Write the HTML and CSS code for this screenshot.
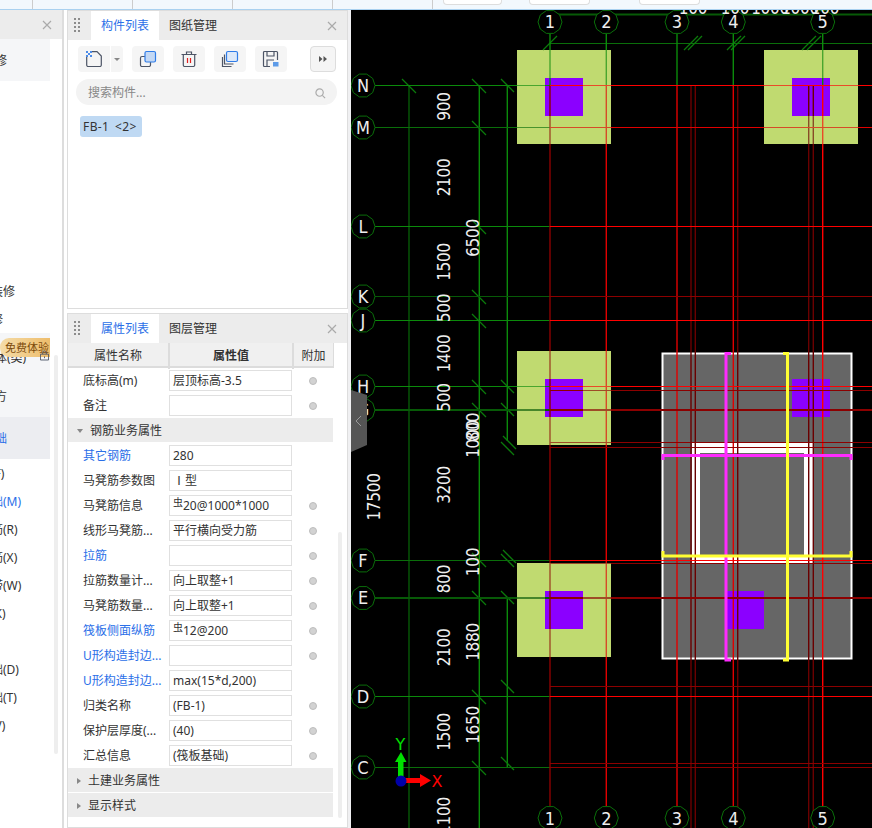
FILE: index.html
```html
<!DOCTYPE html>
<html lang="zh">
<head>
<meta charset="utf-8">
<title>属性列表</title>
<link rel="stylesheet" href="styles.css">
</head>
<body>
<header class="strip">
  <div class="cell cell-first"></div>
  <div class="cell"></div>
  <div class="cell"></div>
  <div class="cell"></div>
  <div class="cell"></div>
  <div class="stub stub-a"></div>
  <div class="stub stub-b"></div>
  <div class="stub stub-c"></div>
</header>
<main class="main">
  <aside class="tree-panel">
    <div class="tree-head"><svg class="close" viewBox="0 0 10 10"><path d="M1 1l8 8M9 1l-8 8"/></svg></div>
    <div class="tree-body">
      <ul class="tree">
        <li class="group soft"><span class="glabel">装修</span></li>
        <li class="item"><span class="ilabel">楼地面</span></li>
        <li class="item"><span class="ilabel">踢脚(V)</span></li>
        <li class="item"><span class="ilabel">墙裙</span></li>
        <li class="item"><span class="ilabel">墙面</span></li>
        <li class="item"><span class="ilabel">天棚</span></li>
        <li class="item"><span class="ilabel">吊顶</span></li>
        <li class="item"><span class="ilabel">房间</span></li>
        <li class="item"><span class="ilabel">独立柱装修</span></li>
        <li class="item"><span class="ilabel">单梁装修</span></li>
        <li class="group soft badge-row"><span class="glabel">砌体(类)</span>
          <span class="badge">免费体验</span>
          <svg class="lock" viewBox="0 0 10 11"><path d="M3 4V2.500a2 2 0 0 1 4 0V4M.5 4h9v6.500h-9z"/><path d="M5 6.500v2"/></svg>
        </li>
        <li class="group soft"><span class="glabel">土方</span></li>
        <li class="group active"><span class="glabel">基础</span></li>
        <li class="item"><span class="ilabel">基础梁(F)</span></li>
        <li class="item on"><span class="ilabel">筏板基础(M)</span></li>
        <li class="item"><span class="ilabel">筏板主筋(R)</span></li>
        <li class="item"><span class="ilabel">筏板负筋(X)</span></li>
        <li class="item"><span class="ilabel">基础板带(W)</span></li>
        <li class="item"><span class="ilabel">集水坑(K)</span></li>
        <li class="item"><span class="ilabel">柱墩</span></li>
        <li class="item"><span class="ilabel">独立基础(D)</span></li>
        <li class="item"><span class="ilabel">条形基础(T)</span></li>
        <li class="item"><span class="ilabel">桩承台(V)</span></li>
      </ul>
      <div class="tree-track"></div>
    </div>
  </aside>

  <section class="mid">
    <div class="panel panel-list">
      <div class="phead">
        <svg class="grip" viewBox="0 0 6 15"><path d="M0 0h2v2H0zM4 0h2v2H4zM0 4h2v2H0zM4 4h2v2H4zM0 8h2v2H0zM4 8h2v2H4zM0 12h2v2H0zM4 12h2v2H4z"/></svg>
        <span class="tab current">构件列表</span>
        <span class="tab">图纸管理</span>
        <svg class="close end" viewBox="0 0 10 10"><path d="M1 1l8 8M9 1l-8 8"/></svg>
      </div>
      <div class="tools">
        <div class="split">
          <button class="tool tool-main">
            <svg class="ico" viewBox="0 0 16 16"><path class="line" d="M.7 5v9a1.500 1.500 0 0 0 1.500 1.500h11.600a1.500 1.500 0 0 0 1.500-1.500V5L11 .7H6"/><path class="dots" d="M0 0h2v2H0zM4 0h2v2H4zM2 2h2v2H2zM0 4h2v2H0zM4 4h2v2H4z"/></svg>
          </button>
          <button class="tool tool-drop"><span class="caret"></span></button>
        </div>
        <button class="tool"><svg class="ico" viewBox="0 0 16 16"><path class="line" d="M5 5.500H2A1.500 1.500 0 0 0 .5 7v7A1.500 1.500 0 0 0 2 15.500h7a1.500 1.500 0 0 0 1.500-1.500v-3"/><rect class="front" x="5" y=".5" width="10.500" height="10.500" rx="1.500"/></svg></button>
        <button class="tool"><svg class="ico" viewBox="0 0 16 16"><path class="line" d="M.5 3.500h15M5.500 3.500V1h5v2.500M2.300 3.500v10.500a1.500 1.500 0 0 0 1.500 1.500h8.400a1.500 1.500 0 0 0 1.500-1.500V3.500"/><path class="red" d="M6.500 7v5M9.500 7v5"/></svg></button>
        <button class="tool"><svg class="ico" viewBox="0 0 16 16"><path class="line" d="M2.500 3.500v9.500h9M.5 6v9.500h9"/><rect class="front pale" x="4.500" y=".5" width="11" height="10" rx="1.500"/></svg></button>
        <button class="tool"><svg class="ico" viewBox="0 0 16 16"><path class="line" d="M7 15.500H1.500a1 1 0 0 1-1-1v-13a1 1 0 0 1 1-1h12a1 1 0 0 1 1 1V9M4 15.500V9h7M4 .5v4.500h7V.5"/><rect class="save" x="9.500" y="10.500" width="6.500" height="5.500"/></svg></button>
        <button class="tool tool-more"><svg class="more" viewBox="0 0 8 6"><path d="M0 0l3.500 3L0 6zM4.500 0L8 3 4.500 6z"/></svg></button>
      </div>
      <div class="search">
        <span>搜索构件...</span>
        <svg class="lens" viewBox="0 0 12 12"><circle cx="5" cy="5" r="4"/><path d="M8 8l3 3"/></svg>
      </div>
      <div class="tag">FB-1 &lt;2&gt;</div>
    </div>

    <div class="panel panel-props">
      <div class="phead">
        <svg class="grip" viewBox="0 0 6 15"><path d="M0 0h2v2H0zM4 0h2v2H4zM0 4h2v2H0zM4 4h2v2H4zM0 8h2v2H0zM4 8h2v2H4zM0 12h2v2H0zM4 12h2v2H4z"/></svg>
        <span class="tab current">属性列表</span>
        <span class="tab">图层管理</span>
        <svg class="close end" viewBox="0 0 10 10"><path d="M1 1l8 8M9 1l-8 8"/></svg>
      </div>
      <div class="props-body">
        <div class="props">
          <div class="thead">
            <div>属性名称</div><div class="th-value">属性值</div><div>附加</div>
          </div>
          <div class="trow"><span class="name">底标高(m)</span><span class="val">层顶标高-3.5</span><i class="dot"></i></div>
          <div class="trow"><span class="name">备注</span><span class="val"></span><i class="dot"></i></div>
          <div class="gro"><span class="tri down"></span>钢筋业务属性</div>
          <div class="trow"><span class="name link">其它钢筋</span><span class="val">280</span></div>
          <div class="trow"><span class="name">马凳筋参数图</span><span class="val">Ⅰ型</span></div>
          <div class="trow"><span class="name">马凳筋信息</span><span class="val"><sup class="rebar">虫</sup>20@1000*1000</span><i class="dot"></i></div>
          <div class="trow"><span class="name">线形马凳筋...</span><span class="val">平行横向受力筋</span><i class="dot"></i></div>
          <div class="trow"><span class="name link">拉筋</span><span class="val"></span><i class="dot"></i></div>
          <div class="trow"><span class="name">拉筋数量计...</span><span class="val">向上取整+1</span><i class="dot"></i></div>
          <div class="trow"><span class="name">马凳筋数量...</span><span class="val">向上取整+1</span><i class="dot"></i></div>
          <div class="trow"><span class="name link">筏板侧面纵筋</span><span class="val"><sup class="rebar">虫</sup>12@200</span><i class="dot"></i></div>
          <div class="trow"><span class="name link">U形构造封边...</span><span class="val"></span><i class="dot"></i></div>
          <div class="trow"><span class="name link">U形构造封边...</span><span class="val">max(15*d,200)</span></div>
          <div class="trow"><span class="name">归类名称</span><span class="val">(FB-1)</span><i class="dot"></i></div>
          <div class="trow"><span class="name">保护层厚度(...</span><span class="val">(40)</span><i class="dot"></i></div>
          <div class="trow"><span class="name">汇总信息</span><span class="val">(筏板基础)</span><i class="dot"></i></div>
          <div class="gro"><span class="tri"></span>土建业务属性</div>
          <div class="gro"><span class="tri"></span>显示样式</div>
        </div>
        <div class="props-track"></div>
      </div>
    </div>
  </section>

  <section class="canvas">
    <svg class="cad" viewBox="351 10 521 818" width="521" height="818">
      <defs>
        <polygon id="b" points="12,0 9.700,7.050 3.700,11.400 -3.700,11.400 -9.700,7.050 -12,0 -9.700,-7.050 -3.700,-11.400 3.700,-11.400 9.700,-7.050"/>
      </defs>
      <rect class="bg" x="351" y="10" width="521" height="818"/>

      <!-- footings -->
      <rect class="foot" x="517" y="50" width="94" height="94"/>
      <rect class="foot" x="764" y="50" width="94" height="94"/>
      <rect class="foot" x="517" y="351" width="94" height="94"/>
      <rect class="foot" x="517" y="563" width="94" height="94"/>

      <!-- slab -->
      <rect class="slab" x="662.500" y="353.500" width="189" height="305"/>
      <rect class="hole" x="692" y="443" width="121" height="121"/>
      <rect class="holein" x="700" y="453" width="104" height="103"/>

      <!-- columns -->
      <rect class="col" x="545" y="78" width="38" height="38"/>
      <rect class="col" x="792" y="78" width="38" height="38"/>
      <rect class="col" x="545" y="379" width="38" height="38"/>
      <rect class="col" x="792" y="379" width="38" height="38"/>
      <rect class="col" x="545" y="591" width="38" height="38"/>
      <rect class="col" x="726" y="591" width="38" height="38"/>

      <!-- dimension lines -->
      <path class="gd v" d="M409 85V828"/>
      <path class="g1 v" d="M479.300 85V828M507.300 85V441M507.300 598V767"/>
      <path class="gd2" d="M557 14.500H872"/>
      <path class="g2" d="M550 43.500H872"/>
      <path class="tick" d="M402 79l14 14"/>
      <path class="tick" d="M472 79l14 14M472 121l14 14M472 220l14 14M472 290l14 14M472 314l14 14M472 380l14 14M472 403l14 14M472 553l14 14M472 591l14 14M472 690l14 14M472 761l14 14"/>
      <path class="tick" d="M501 79l13 13M501 380l13 13M501 403l13 13M501 591l13 13M501 680l13 13M501 757l13 13M501 442l13 13M503 436l13 13M501 554l13 13M503 550l13 13"/>
      <path class="tick" d="M543 50l14-14M684 50l14-14M688 50l14-14M727 50l14-14M731 50l14-14M802 50l14-14M807 50l14-14"/>
      <path class="tick" d="M544 20l10-9M601 20l9-9M672 20l9-9M729 20l9-9M817 20l9-9"/>

      <!-- green grid -->
      <path class="g1 v" d="M550 34V85M606.300 34V85M677 34V85M733.300 34V85M822.700 34V85"/>
      <path class="g1" d="M375 85.500H550M375 226.500H550M375 320.500H550M375 386.500H550M375 696.500H550"/>
      <path class="g2" d="M375 127.500H550M375 767.500H550M375 560.500H550"/>
      <path class="gd" d="M375 296.500H550"/>
      <path class="gd wide" d="M375 410H550M375 598H550"/>

      <!-- red grid -->
      <path class="rd v" d="M550 85V806"/>
      <path class="r2 v" d="M606.300 85V806M677 85V806M733.300 85V806"/>
      <path class="r1 v" d="M822.700 85V806"/>
      <path class="rk v" d="M691 85V828M695.300 85V828M737.700 85V828M808.700 85V828M813.300 85V828"/>
      <path class="r1" d="M550 85.500H872M550 226.500H872M550 320.500H872M550 386.500H872M550 560.500H872M550 696.500H872"/>
      <path class="r2" d="M550 127.500H872"/>
      <path class="rd" d="M550 296.500H872M550 390.500H872M550 442.500H872M550 447.500H872M550 563.500H872M550 686.500H872M550 763.500H872M550 767.500H872"/>
      <path class="rd wide" d="M550 410H872M550 598H872"/>

      <!-- veil softens the lines that run over the footing -->
      <path class="veil" d="M517 50h94v94h-94zM545 78v38h38V78zM764 50h94v94h-94zM792 78v38h38V78zM517 351h94v94h-94zM545 379v38h38v-38zM517 563h94v94h-94zM545 591v38h38v-38z"/>

      <!-- rebar -->
      <path class="mag" d="M731 353.500H726V660H731"/>
      <path class="mag" d="M663 460V455.500H851V460"/>
      <path class="yel" d="M783 353.500H787.500V660H783"/>
      <path class="yel" d="M663 551V556H851V551"/>

      <!-- axis bubbles -->
      <g class="bubbles">
        <use href="#b" x="550" y="22"/><use href="#b" x="606.300" y="22"/><use href="#b" x="677" y="22"/><use href="#b" x="733.300" y="22"/><use href="#b" x="822.700" y="22"/>
        <use href="#b" x="550" y="818"/><use href="#b" x="606.300" y="818"/><use href="#b" x="677" y="818"/><use href="#b" x="733.300" y="818"/><use href="#b" x="822.700" y="818"/>
        <use href="#b" x="363" y="85.500"/><use href="#b" x="363" y="127.500"/><use href="#b" x="363" y="226.500"/><use href="#b" x="363" y="296.500"/><use href="#b" x="363" y="320.500"/><use href="#b" x="363" y="386.500"/><use href="#b" x="363" y="410"/><use href="#b" x="363" y="560.500"/><use href="#b" x="363" y="598"/><use href="#b" x="363" y="696.500"/><use href="#b" x="363" y="767.500"/>
      </g>
      <g class="label">
        <text x="550" y="28">1</text><text x="606.300" y="28">2</text><text x="677" y="28">3</text><text x="733.300" y="28">4</text><text x="822.700" y="28">5</text>
        <text x="550" y="825">1</text><text x="606.300" y="825">2</text><text x="677" y="825">3</text><text x="733.300" y="825">4</text><text x="822.700" y="825">5</text>
        <text x="363" y="92">N</text><text x="363" y="134">M</text><text x="363" y="233">L</text><text x="363" y="303">K</text><text x="363" y="327">J</text><text x="363" y="393">H</text><text x="363" y="416">G</text><text x="363" y="567">F</text><text x="363" y="604">E</text><text x="363" y="703">D</text><text x="363" y="774">C</text>
      </g>

      <!-- horizontal dimension text, clipped by the top of the view -->
      <g class="dim">
        <text x="693" y="14">100</text><text x="735" y="14">100</text><text x="770" y="14">1000</text><text x="800" y="14">1000</text><text x="825" y="14">100</text>
      </g>

      <!-- vertical dimension text -->
      <g class="dim">
        <text transform="translate(450 106.500) rotate(-90)">900</text>
        <text transform="translate(450 177.500) rotate(-90)">2100</text>
        <text transform="translate(450 262) rotate(-90)">1500</text>
        <text transform="translate(450 308) rotate(-90)">500</text>
        <text transform="translate(450 353.500) rotate(-90)">1400</text>
        <text transform="translate(450 397.500) rotate(-90)">500</text>
        <text transform="translate(450 485) rotate(-90)">3200</text>
        <text transform="translate(450 579) rotate(-90)">800</text>
        <text transform="translate(450 647.500) rotate(-90)">2100</text>
        <text transform="translate(450 732) rotate(-90)">1500</text>
        <text transform="translate(450 816) rotate(-90)">1100</text>
        <text transform="translate(478.500 238) rotate(-90)">6500</text>
        <text transform="translate(478.500 427) rotate(-90)">800</text>
        <text transform="translate(478.500 439) rotate(-90)">1000</text>
        <text transform="translate(478.500 562) rotate(-90)">100</text>
        <text transform="translate(478.500 642) rotate(-90)">1880</text>
        <text transform="translate(478.500 725) rotate(-90)">1650</text>
        <text transform="translate(380 497) rotate(-90)">17500</text>
      </g>

      <!-- axis triad -->
      <path class="ax-g" d="M398 781V762H395L401 752 406.500 762H403.500V781z"/>
      <path class="ax-r" d="M401 778H420V774L431 780.500 420 787V783H401z"/>
      <circle class="ax-o" cx="401" cy="781" r="5.500"/>
      <text class="ax-ty" x="400.500" y="750">Y</text>
      <text class="ax-tx" x="437" y="787">X</text>

      <!-- collapse handle -->
      <path class="handle" d="M351 390L367 395V445L351 452z"/>
      <path class="chev" d="M361 416l-5 5 5 5"/>
    </svg>
  </section>
</main>
</body>
</html>
```
FILE: styles.css
```css
* { box-sizing: border-box; }
html, body { margin: 0; padding: 0; }
body {
  width: 872px;
  height: 828px;
  overflow: hidden;
  background: #fff;
  color: #333;
  font: 12px/1.2 "Noto Sans", "Noto Sans CJK SC", sans-serif;
  display: flex;
  flex-direction: column;
}
ul { list-style: none; margin: 0; padding: 0; }
button { border: 0; padding: 0; font: inherit; }

/* top strip */
.strip {
  height: 10px;
  flex: none;
  display: flex;
  align-items: flex-start;
  background: #f2f8fd;
  border-bottom: 1px solid #a9d1f0;
}
.cell { width: 100px; height: 9px; border-right: 1px solid #ccc; }
.cell-first { width: 33px; }
.stub { height: 5px; background: #fff; border: 1px solid #ddd; border-top: 0; border-radius: 0 0 4px 4px; }
.stub-a { width: 59px; margin-left: 10px; }
.stub-b { width: 61px; margin-left: 27px; }
.stub-c { width: 61px; margin-left: 49px; }

.main { flex: 1; display: flex; min-height: 0; }

/* far left tree */
.tree-panel {
  width: 64px;
  flex: none;
  border-right: 2px solid #ddd;
  overflow: hidden;
}
.tree-head {
  height: 29px;
  background: #ececec;
  display: flex;
  align-items: center;
  justify-content: flex-end;
  padding-right: 10px;
}
.close { width: 10px; height: 10px; fill: none; stroke: #aaa; stroke-width: 1.200; }
.close.end { margin-left: auto; margin-right: 10px; }
.tree-body { display: flex; }
.tree { width: 50px; flex: none; overflow: hidden; }
.item { height: 28px; padding-top: 2px; display: flex; align-items: center; white-space: nowrap; }
.group { height: 42px; padding-top: 2px; display: flex; align-items: center; white-space: nowrap; position: relative; }
.soft { background: #f5f6f8; }
.active { background: #ecedf1; color: #2b6fe8; }
.on { color: #2b6fe8; }
.ilabel { margin-left: -45px; }
.glabel { margin-left: -17px; }
.badge-row .glabel { padding-top: 6px; }
.badge {
  position: absolute;
  left: 0;
  top: 5px;
  width: 50px;
  height: 19px;
  line-height: 19px;
  padding-left: 5px;
  font-size: 11px;
  border-radius: 9px 0 0 9px;
  background: linear-gradient(90deg, #f4dca8, #eebd6c);
  color: #7c4a0a;
}
.lock {
  position: absolute;
  left: 40px;
  top: 17px;
  width: 9px;
  height: 11px;
  fill: none;
  stroke: #4d5566;
}
.tree-track {
  width: 4px;
  height: 399px;
  margin: 316px 0 0 4px;
  border-radius: 2px;
  background: #eee;
}

/* middle column */
.mid {
  width: 281px;
  flex: none;
  margin-left: 3px;
  display: flex;
  flex-direction: column;
  gap: 4px;
}
.panel { border: 1px solid #ddd; border-top-color: #ddd; }
.panel-list { height: 299px; }
.panel-props { flex: 1; min-height: 0; }
.phead {
  height: 29px;
  background: #ececec;
  display: flex;
  align-items: stretch;
  padding-left: 6px;
}
.grip { width: 6px; height: 15px; align-self: center; fill: #8c8c8c; margin-right: 11px; }
.tab { width: 68px; text-align: center; line-height: 30px; font-size: 12px; color: #333; }
.current { background: #fff; color: #2b6fe8; }
.phead .close { align-self: center; }

.tools { display: flex; gap: 9px; padding: 6px 0 0 10px; align-items: flex-start; }
.split { display: flex; gap: 1px; }
.tool {
  width: 32px;
  height: 26px;
  background: #f5f5f5;
  border-radius: 4px;
  display: flex;
  align-items: center;
  justify-content: center;
}
.tool-main { border-radius: 4px 0 0 4px; }
.tool-drop { width: 12px; border-radius: 0 4px 4px 0; }
.tool-more { width: 26px; margin-left: 14px; border: 1px solid #ddd; }
.caret { border: 3px solid transparent; border-top: 3px solid #888; border-bottom: 0; }
.ico { width: 16px; height: 16px; overflow: visible; }
.line { fill: none; stroke: #4d5566; stroke-width: 1.200; }
.dots { fill: #4c8be8; }
.front { fill: #c3d8f4; stroke: #2f7ce8; stroke-width: 1.200; }
.pale { fill: #dde9f9; }
.red { fill: none; stroke: #e02020; stroke-width: 1.200; }
.save { fill: #5d9be8; stroke: #f5f5f5; stroke-width: 1; }
.more { width: 8px; height: 6px; fill: #555; }

.search {
  height: 26px;
  margin: 7px 10px 0 8px;
  border-radius: 13px;
  background: #f3f3f3;
  color: #888;
  display: flex;
  align-items: center;
  justify-content: space-between;
  padding: 2px 11px 0 12px;
  font-size: 12px;
}
.lens { width: 11px; height: 11px; fill: none; stroke: #aaa; stroke-width: 1.300; }
.tag {
  width: 62px;
  height: 21px;
  line-height: 21px;
  margin: 11px 0 0 12px;
  padding-left: 3px;
  background: #bfd9f3;
  border-radius: 3px;
  color: #333;
  white-space: nowrap;
  letter-spacing: .4px;
  word-spacing: 2px;
}

/* properties */
.props-body { display: flex; }
.props { width: 266px; flex: none; }
.thead {
  height: 25px;
  display: grid;
  grid-template-columns: 100px 124px 41px;
  background: #f0f0f0;
  border-bottom: 2px solid #dcdcdc;
  border-right: 1px solid #dcdcdc;
  text-align: center;
  line-height: 26px;
}
.thead > div + div { border-left: 2px solid #dcdcdc; }
.th-value { font-weight: 700; }
.trow {
  height: 25px;
  display: grid;
  grid-template-columns: 101px 123px 42px;
  align-items: center;
}
.name { padding: 2px 0 0 15px; white-space: nowrap; }
.link { color: #2b6fe8; }
.val {
  height: 21px;
  line-height: 20px;
  padding-left: 3px;
  border: 1px solid #e0e0e0;
  white-space: nowrap;
  overflow: hidden;
}
.dot {
  width: 8px;
  height: 8px;
  justify-self: center;
  margin-left: -1px;
  border-radius: 50%;
  background: #d2d2d2;
  border: 1px solid #bdbdbd;
}
.rebar { font-size: 10px; line-height: 0; vertical-align: 4px; }
.gro {
  height: 24px;
  margin-bottom: 1px;
  padding: 2px 0 0 9px;
  background: #ececec;
  width: 265px;
  display: flex;
  align-items: center;
}
.tri {
  width: 0;
  height: 0;
  margin-right: 7px;
  border-style: solid;
  border-width: 3px 0 3px 4px;
  border-color: transparent transparent transparent #888;
}
.tri.down { border-width: 4px 3px 0; border-color: #888 transparent transparent; }
.props-track {
  width: 4px;
  height: 286px;
  margin: 189px 0 0 4px;
  border-radius: 2px;
  background: #eee;
}

/* drawing */
.canvas {
  width: 524px;
  flex: none;
  border-left: 3px solid #f0f0f2;
  overflow: hidden;
}
.cad { display: block; }
.bg { fill: #000; }
.foot { fill: #c1da70; }
.col { fill: #8b00ff; }
.slab { fill: #666; stroke: #fff; stroke-width: 2; }
.hole { fill: #fff; }
.holein { fill: #666; }
.veil { fill: #c1da70; fill-rule: evenodd; opacity: .35; }
.g1, .g2, .gd, .gd2, .tick, .rd, .r1, .r2, .rk, .mag, .yel, .bubbles, .chev { fill: none; }
.g1 { stroke: #0b8a0b; }
.g2 { stroke: #0a6e0a; }
.gd { stroke: #075a07; }
.gd2 { stroke: #075a07; stroke-width: 2; }
.tick { stroke: #0b7a0b; stroke-width: 1.300; }
.rd { stroke: #8c0000; }
.r1 { stroke: #f00; }
.r2 { stroke: #e00000; }
.rk { stroke: #6a0000; }
.v { stroke-width: 1.400; }
.wide { stroke-width: 2; }
.mag { stroke: #ff2bff; stroke-width: 3; }
.yel { stroke: #ffff33; stroke-width: 3; }
.bubbles { stroke: #0a6e0a; }
.bubbles use { fill: #000; }
.label, .dim { fill: #eee; font-family: "DejaVu Sans", sans-serif; font-stretch: condensed; }
.label { font-size: 18px; text-anchor: middle; }
.dim { font-size: 17px; text-anchor: middle; letter-spacing: -.3px; }
.ax-g { fill: #00e000; }
.ax-r { fill: #f00; }
.ax-o { fill: #0000a8; }
.ax-ty { fill: #00e000; font: 16px "DejaVu Sans", sans-serif; text-anchor: middle; }
.ax-tx { fill: #f00; font: 16px "DejaVu Sans", sans-serif; text-anchor: middle; }
.handle { fill: #555; }
.chev { stroke: #999; }
```
